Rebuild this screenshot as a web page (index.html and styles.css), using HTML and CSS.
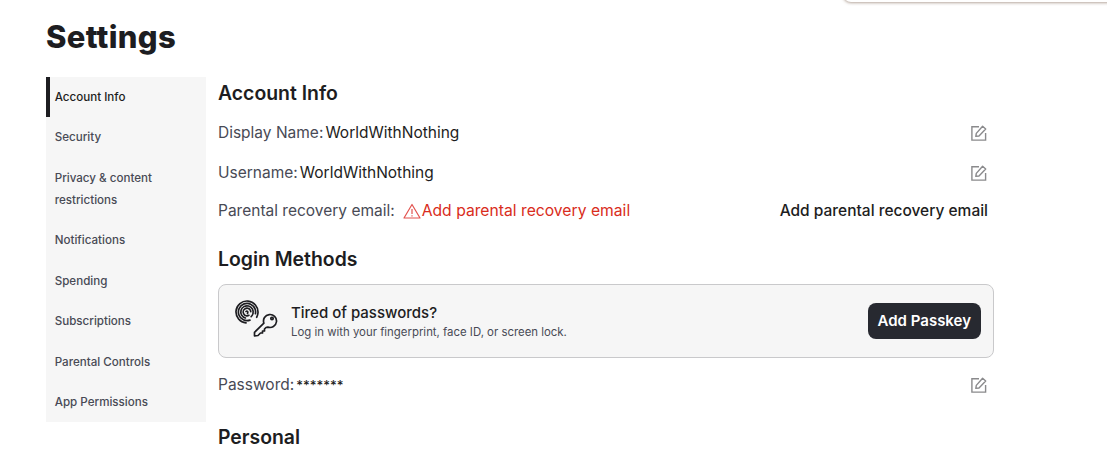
FILE: index.html
```html
<!DOCTYPE html>
<html lang="en">
<head>
<meta charset="utf-8">
<title>Settings</title>
<link rel="stylesheet" href="styles.css">
</head>
<body>
<div class="top-popover"></div>
<div class="page">
  <h1 class="title">Settings</h1>
  <div class="layout">
    <nav class="sidebar">
      <a class="nav-item active">Account Info</a>
      <a class="nav-item">Security</a>
      <a class="nav-item">Privacy &amp; content restrictions</a>
      <a class="nav-item">Notifications</a>
      <a class="nav-item">Spending</a>
      <a class="nav-item">Subscriptions</a>
      <a class="nav-item">Parental Controls</a>
      <a class="nav-item">App Permissions</a>
    </nav>
    <main class="content">
      <h2 class="heading first">Account Info</h2>
      <div class="row">
        <div class="pair"><span class="label">Display Name:</span><span class="value">WorldWithNothing</span></div>
        <svg class="edit" viewBox="0 0 16 16" fill="none" stroke="#8a8a8c" stroke-width="1.4"><path d="M8 1.700H.9v13.400h13.700V8"/><path d="M4.800 11.400l.5-3L11.600 1.300l3.100 2.700-6.700 7z" stroke-linejoin="round"/></svg>
      </div>
      <div class="row">
        <div class="pair"><span class="label">Username:</span><span class="value">WorldWithNothing</span></div>
        <svg class="edit" viewBox="0 0 16 16" fill="none" stroke="#8a8a8c" stroke-width="1.4"><path d="M8 1.700H.9v13.400h13.700V8"/><path d="M4.800 11.400l.5-3L11.600 1.300l3.100 2.700-6.700 7z" stroke-linejoin="round"/></svg>
      </div>
      <div class="row recovery">
        <div class="recovery-left">
          <span class="label">Parental recovery email:</span>
          <span class="alert">
            <svg class="warn" viewBox="0 0 18 16" fill="none" stroke="#e2534f" stroke-width="1.2"><path d="M9 1.500L1 15h16z" stroke-linejoin="round"/><path d="M9 6v5M9 12.200v1.300"/></svg>Add parental recovery email
          </span>
        </div>
        <a class="value link">Add parental recovery email</a>
      </div>
      <h2 class="heading">Login Methods</h2>
      <section class="passkey">
        <svg class="passkey-icon" viewBox="0 0 44 40" fill="none" stroke="#1d1d21" stroke-linecap="round">
          <g stroke-width="1.700">
            <circle cx="12" cy="14" r="11" stroke-dasharray="56 13" transform="rotate(95 12 14)"/>
            <circle cx="12" cy="14" r="8.600" stroke-dasharray="45 9" transform="rotate(70 12 14)"/>
            <circle cx="12" cy="14" r="6.200" stroke-dasharray="32 7" transform="rotate(105 12 14)"/>
            <circle cx="12" cy="14" r="3.800" stroke-dasharray="19 5" transform="rotate(60 12 14)"/>
            <path d="M11 13.500c1-1 2.500 0 1.500 2"/>
          </g>
          <g stroke-width="1.700" stroke-linejoin="round">
            <path d="M28.900 25.200A6.500 6.500 0 1 1 32.800 29.100L31 29.500 29.500 31v2h-2v2h-2L23 37.500l-3.500.5v-3.700z"/>
            <circle cx="37" cy="20.500" r="1.200"/>
          </g>
        </svg>
        <div class="passkey-text">
          <div class="passkey-title">Tired of passwords?</div>
          <div class="passkey-sub">Log in with your fingerprint, face ID, or screen lock.</div>
        </div>
        <button class="passkey-btn">Add Passkey</button>
      </section>
      <div class="row password">
        <div class="pair"><span class="label">Password:</span><span class="value stars">*******</span></div>
        <svg class="edit" viewBox="0 0 16 16" fill="none" stroke="#8a8a8c" stroke-width="1.4"><path d="M8 1.700H.9v13.400h13.700V8"/><path d="M4.800 11.400l.5-3L11.600 1.300l3.100 2.700-6.700 7z" stroke-linejoin="round"/></svg>
      </div>
      <h2 class="heading last">Personal</h2>
    </main>
  </div>
</div>
</body>
</html>
```
FILE: styles.css
```css
* { box-sizing: border-box; }
html, body { margin: 0; height: 465px; overflow: hidden; background: #fff; }
body { font-family: Inter, "Noto Sans", "Liberation Sans", sans-serif; color: #1d1d21; }
.top-popover {
  position: absolute; top: -20px; left: 843px; width: 290px; height: 22px;
  background: #fff; border-radius: 8px;
  box-shadow: 0 1px 3px rgba(110, 80, 60, .5);
}
.page { padding: 18px 0 0 46px; width: 994px; }
.title { margin: 0; font-size: 31px; line-height: 37px; font-weight: 800; letter-spacing: .3px; color: #1d1d21; }
.layout { display: flex; gap: 12px; margin-top: 22px; align-items: flex-start; }
.sidebar { width: 160px; height: 345px; flex: none; background: #f6f6f6; display: flex; flex-direction: column; }
.nav-item { display: block; padding: 8.900px 8.700px 9.600px; font-size: 11.600px; line-height: 22px; font-weight: 500; color: #484a55; }
.nav-item.active { color: #1d1d21; box-shadow: inset 4px 0 0 #1d1d21; }
.content { flex: 1; min-width: 0; }
.heading { margin: 26px 0 0; font-size: 19.400px; line-height: 24px; font-weight: 600; color: #1d1d21; }
.heading.first { margin-top: 4px; }
.heading.last { margin-top: 30px; }
.row { display: flex; justify-content: space-between; align-items: center; font-size: 15.500px; line-height: 20px; margin-top: 20px; padding-right: 6px; }
.heading.first + .row { margin-top: 18px; }
.pair { display: flex; gap: 2px; align-items: baseline; }
.label { color: #484a55; }
.value { color: #1d1d21; }
.stars { font-size: 13px; font-weight: 500; }
.edit { width: 16px; height: 16px; margin-right: 1px; flex: none; }
.recovery { margin-top: 18px; }
.recovery-left { display: flex; align-items: center; gap: 8px; }
.alert { color: #d92c20; display: inline-flex; align-items: center; font-size: 15.700px; }
.warn { width: 18px; height: 16px; flex: none; margin-right: 1px; }
.link { font-weight: 500; }
.passkey {
  display: flex; align-items: center; height: 74px; margin-top: 13px; padding: 0 12px 0 16px;
  background: #f6f6f6; border: 1px solid #c9c9cb; border-radius: 8px;
}
.passkey-icon { width: 44px; height: 40px; flex: none; margin: 0 12px 7px 0; }
.passkey-text { flex: 1; }
.passkey-title { font-size: 15px; line-height: 20px; font-weight: 500; color: #1d1d21; }
.passkey-sub { margin-top: 1px; font-size: 11.400px; line-height: 16px; color: #484a55; }
.passkey-btn {
  height: 36px; padding: 0 10px; border: 0; border-radius: 8px; background: #272930; color: #fff;
  font: 600 15px/20px Inter, "Noto Sans", sans-serif;
}
.password { margin-top: 17px; }
```
